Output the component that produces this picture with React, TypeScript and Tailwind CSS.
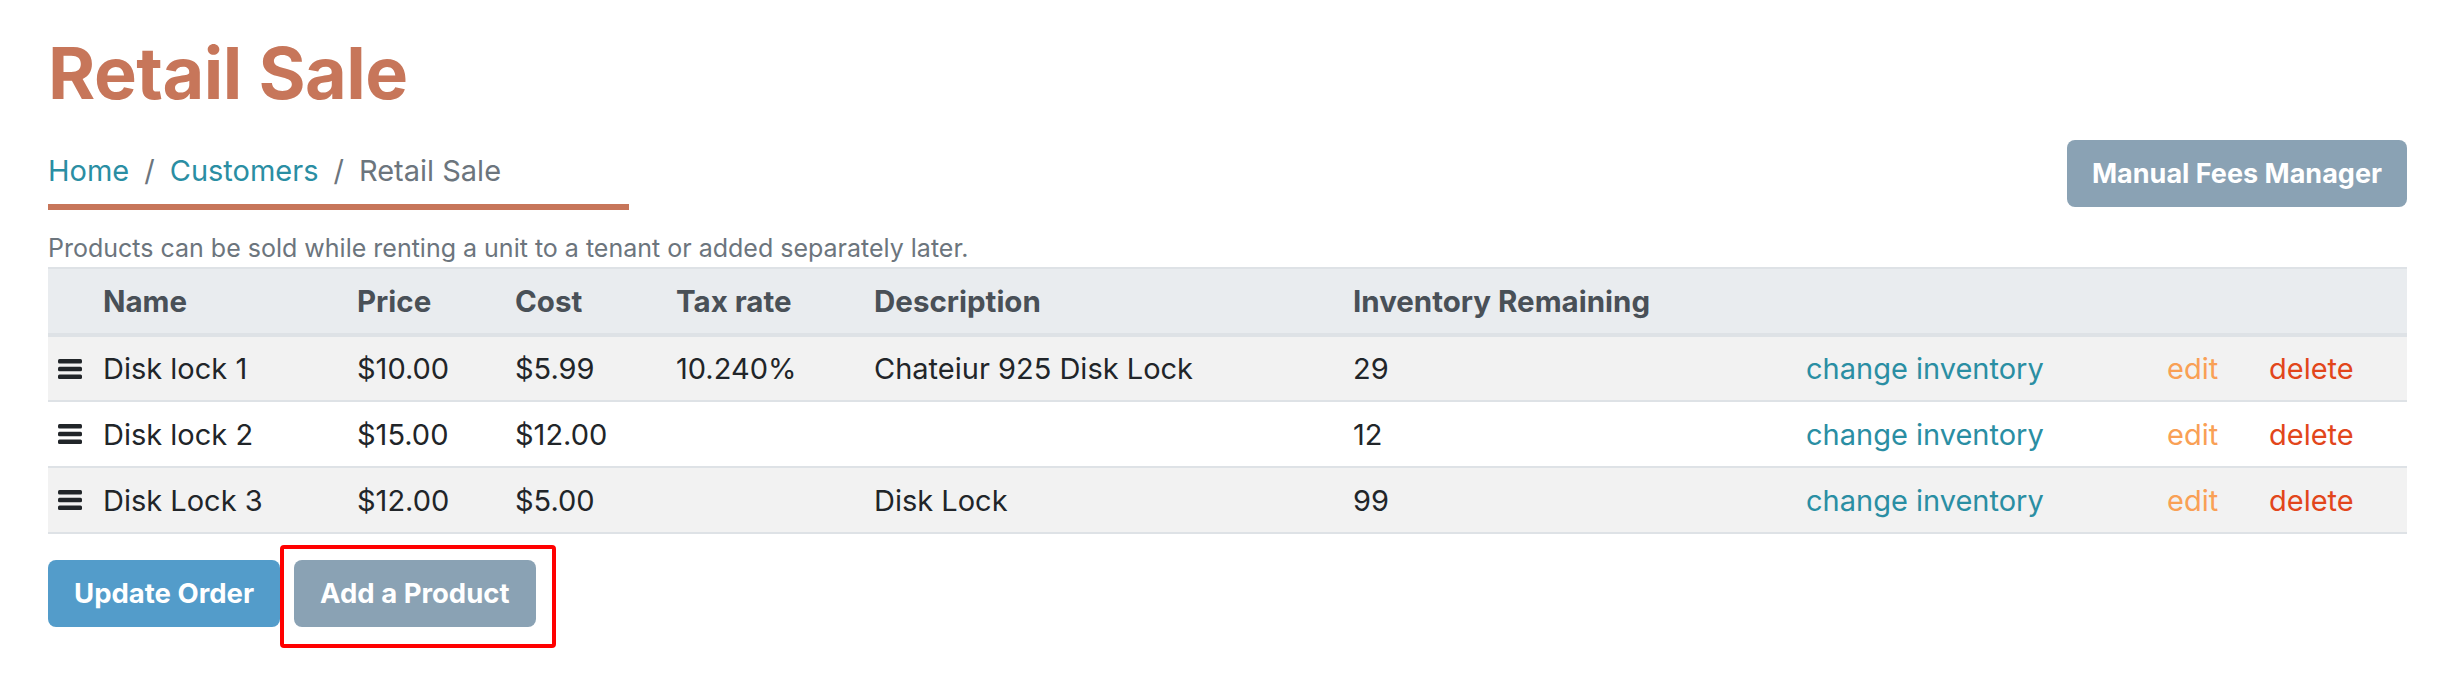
import React from 'react';

const PRODUCTS = [
  { name: 'Disk lock 1', price: '$10.00', cost: '$5.99', tax: '10.240%', description: 'Chateiur 925 Disk Lock', inventory: 29 },
  { name: 'Disk lock 2', price: '$15.00', cost: '$12.00', tax: '', description: '', inventory: 12 },
  { name: 'Disk Lock 3', price: '$12.00', cost: '$5.00', tax: '', description: 'Disk Lock', inventory: 99 },
];

function DragHandle() {
  return (
    <svg width="24" height="20" viewBox="0 0 24 20" className="block">
      <rect x="0" y="0" width="24" height="4.5" rx="1.5" fill="#212529" />
      <rect x="0" y="7.75" width="24" height="4.5" rx="1.5" fill="#212529" />
      <rect x="0" y="15.5" width="24" height="4.5" rx="1.5" fill="#212529" />
    </svg>
  );
}

export default function App() {
  return (
    <div className="min-h-screen bg-white pl-[48px] pr-[35px] pt-[30px]" style={{ fontFamily: 'Inter, "Noto Sans", sans-serif' }}>
      {/* Title */}
      <h1 className="text-[72px] leading-[1.2] font-bold text-[#c7765a] tracking-[-0.5px]">Retail Sale</h1>

      {/* Breadcrumb + action */}
      <div className="flex items-end justify-between mt-[24px]">
        <div className="w-[581px] pb-[12px] border-b-[6px] border-[#c7765a]">
          <nav className="flex items-center gap-[15px] text-[29px] leading-[42px] text-[#6c757d]">
            <a className="text-[#2a8ea3]">Home</a>
            <span>/</span>
            <a className="text-[#2a8ea3]">Customers</a>
            <span>/</span>
            <span>Retail Sale</span>
          </nav>
        </div>
        <button className="h-[67px] px-[25px] mb-[3px] rounded-[8px] bg-[#8aa2b4] text-white text-[27px] font-bold">
          Manual Fees Manager
        </button>
      </div>

      <p className="mt-[20px] text-[25px] leading-[36px] text-[#6c757d]">
        Products can be sold while renting a unit to a tenant or added separately later.
      </p>

      {/* Products table */}
      <table className="mt-[1px] w-full table-fixed border-collapse text-[29px] text-[#212529]">
        <thead>
          <tr className="h-[67px] bg-[#e9ecef] border-t-2 border-b-4 border-[#dee2e6] text-[#495057] text-left text-[29.5px]">
            <th className="w-[44px]"></th>
            <th className="w-[254px] px-[11px] font-bold">Name</th>
            <th className="w-[158px] px-[11px] font-bold">Price</th>
            <th className="w-[161px] px-[11px] font-bold">Cost</th>
            <th className="w-[198px] px-[11px] font-bold">Tax rate</th>
            <th className="w-[479px] px-[11px] font-bold">Description</th>
            <th className="w-[453px] px-[11px] font-bold whitespace-nowrap">Inventory Remaining</th>
            <th className="w-[361px]"></th>
            <th className="w-[102px]"></th>
            <th className="w-[149px]"></th>
          </tr>
        </thead>
        <tbody>
          {PRODUCTS.map((p, i) => (
            <tr key={p.name} className={`h-[66px] border-b-2 border-[#dee2e6] ${i % 2 === 0 ? 'bg-[#f2f2f2]' : 'bg-white'}`}>
              <td className="pl-[10px]"><DragHandle /></td>
              <td className="px-[11px]">{p.name}</td>
              <td className="px-[11px]">{p.price}</td>
              <td className="px-[11px]">{p.cost}</td>
              <td className="px-[11px]">{p.tax}</td>
              <td className="px-[11px]">{p.description}</td>
              <td className="px-[11px]">{p.inventory}</td>
              <td className="px-[11px] text-[#2a8ea3] whitespace-nowrap">change inventory</td>
              <td className="px-[11px] text-[#f9a055]">edit</td>
              <td className="px-[11px] text-[#e2461b]">delete</td>
            </tr>
          ))}
        </tbody>
      </table>

      {/* Footer actions */}
      <div className="flex items-center gap-[14px] mt-[26px]">
        <button className="h-[67px] px-[26px] rounded-[8px] bg-[#539cca] text-white text-[27.5px] font-bold">
          Update Order
        </button>
        <div className="relative">
          <button className="h-[67px] px-[26px] rounded-[8px] bg-[#8aa2b4] text-white text-[27.5px] font-bold">
            Add a Product
          </button>
          <div className="absolute left-[-14px] right-[-20px] top-[-15px] bottom-[-21px] border-[4px] border-[#ff0000] rounded-[4px] pointer-events-none" />
        </div>
      </div>
    </div>
  );
}
